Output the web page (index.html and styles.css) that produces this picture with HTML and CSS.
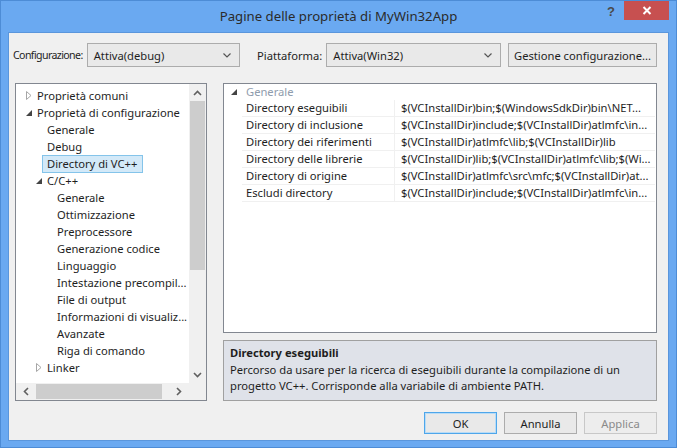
FILE: index.html
```html
<!DOCTYPE html>
<html lang="it">
<head>
<meta charset="utf-8">
<title>Pagine delle proprietà di MyWin32App</title>
<link rel="stylesheet" href="styles.css">
</head>
<body>
<div class="window">
  <div class="titlebar">
    <div></div>
    <div class="title">Pagine delle proprietà di MyWin32App</div>
    <div class="controls">
      <span class="help">?</span>
      <span class="close"><svg width="10" height="9" viewBox="0 0 10 9"><path d="M1.5 1 L8.5 8 M8.5 1 L1.5 8" stroke="#fff" stroke-width="2"/></svg></span>
    </div>
  </div>
  <div class="client">
    <div class="toprow">
      <div class="group group1">
        <span class="lbl lbl1">Configurazione:</span>
        <div class="combo"><span>Attiva(debug)</span><svg class="chev" width="8" height="5" viewBox="0 0 8 5"><path d="M0.5 0.5 L4 4 L7.5 0.5" fill="none" stroke="#555" stroke-width="1.2"/></svg></div>
      </div>
      <div class="group group2">
        <span class="lbl">Piattaforma:</span>
        <div class="combo"><span>Attiva(Win32)</span><svg class="chev" width="8" height="5" viewBox="0 0 8 5"><path d="M0.5 0.5 L4 4 L7.5 0.5" fill="none" stroke="#555" stroke-width="1.2"/></svg></div>
      </div>
      <div class="btn gest">Gestione configurazione...</div>
    </div>
    <div class="main">
      <div class="treepanel">
        <div class="treetop">
          <div class="tree">
            <div class="item l0"><svg class="arr" width="6" height="9" viewBox="0 0 6 9"><path d="M0.5 0.5 L5 4.5 L0.5 8.5 Z" fill="none" stroke="#a6a6a6"/></svg>Proprietà comuni</div>
            <div class="item l0"><svg class="arr exp" width="6" height="6" viewBox="0 0 6 6"><path d="M6 0 L6 6 L0 6 Z" fill="#444"/></svg>Proprietà di configurazione</div>
            <div class="item l1">Generale</div>
            <div class="item l1">Debug</div>
            <div class="item l1"><span class="sel">Directory di VC++</span></div>
            <div class="item l1 c"><svg class="arr exp" width="6" height="6" viewBox="0 0 6 6"><path d="M6 0 L6 6 L0 6 Z" fill="#444"/></svg>C/C++</div>
            <div class="item l2">Generale</div>
            <div class="item l2">Ottimizzazione</div>
            <div class="item l2">Preprocessore</div>
            <div class="item l2">Generazione codice</div>
            <div class="item l2">Linguaggio</div>
            <div class="item l2">Intestazione precompil...</div>
            <div class="item l2">File di output</div>
            <div class="item l2">Informazioni di visualiz...</div>
            <div class="item l2">Avanzate</div>
            <div class="item l2">Riga di comando</div>
            <div class="item l1 c"><svg class="arr" width="6" height="9" viewBox="0 0 6 9"><path d="M0.5 0.5 L5 4.5 L0.5 8.5 Z" fill="none" stroke="#a6a6a6"/></svg>Linker</div>
          </div>
          <div class="vscroll">
            <div class="sbtn"><svg width="9" height="6" viewBox="0 0 9 6"><path d="M1 5 L4.5 1.5 L8 5" fill="none" stroke="#606060" stroke-width="1.6"/></svg></div>
            <div class="vthumb"></div>
            <div class="vtrack"></div>
            <div class="sbtn"><svg width="9" height="6" viewBox="0 0 9 6"><path d="M1 1 L4.5 4.5 L8 1" fill="none" stroke="#606060" stroke-width="1.6"/></svg></div>
          </div>
        </div>
        <div class="hscroll">
          <div class="sbtn hbtn"><svg width="6" height="9" viewBox="0 0 6 9"><path d="M5 1 L1.5 4.5 L5 8" fill="none" stroke="#606060" stroke-width="1.6"/></svg></div>
          <div class="hthumb"></div>
          <div class="htrack"></div>
          <div class="sbtn hbtn"><svg width="6" height="9" viewBox="0 0 6 9"><path d="M1 1 L4.5 4.5 L1 8" fill="none" stroke="#606060" stroke-width="1.6"/></svg></div>
          <div class="corner"></div>
        </div>
      </div>
      <div class="rightcol">
        <div class="grid">
          <div class="cat"><svg class="carr" width="6" height="6" viewBox="0 0 6 6"><path d="M6 0 L6 6 L0 6 Z" fill="#444"/></svg>Generale</div>
          <div class="row"><div class="name">Directory eseguibili</div><div class="val">$(VCInstallDir)bin;$(WindowsSdkDir)bin\NET...</div></div>
          <div class="row"><div class="name">Directory di inclusione</div><div class="val">$(VCInstallDir)include;$(VCInstallDir)atlmfc\in...</div></div>
          <div class="row"><div class="name">Directory dei riferimenti</div><div class="val">$(VCInstallDir)atlmfc\lib;$(VCInstallDir)lib</div></div>
          <div class="row"><div class="name">Directory delle librerie</div><div class="val">$(VCInstallDir)lib;$(VCInstallDir)atlmfc\lib;$(Wi...</div></div>
          <div class="row"><div class="name">Directory di origine</div><div class="val">$(VCInstallDir)atlmfc\src\mfc;$(VCInstallDir)at...</div></div>
          <div class="row"><div class="name">Escludi directory</div><div class="val">$(VCInstallDir)include;$(VCInstallDir)atlmfc\in...</div></div>
        </div>
        <div class="desc">
          <div class="dtitle">Directory eseguibili</div>
          <div class="dtext">Percorso da usare per la ricerca di eseguibili durante la compilazione di un progetto VC++. Corrisponde alla variabile di ambiente PATH.</div>
        </div>
      </div>
    </div>
    <div class="buttons">
      <div class="btn dbtn ok">OK</div>
      <div class="btn dbtn">Annulla</div>
      <div class="btn dbtn dis">Applica</div>
    </div>
  </div>
</div>
</body>
</html>
```
FILE: styles.css
```css
* { box-sizing: border-box; }
html, body { margin: 0; padding: 0; }
body {
  font-family: "Noto Sans", "Open Sans", sans-serif;
  font-size: 11.2px;
  color: #1e1e1e;
  background: #fff;
}
.window {
  width: 677px;
  height: 448px;
  background: #6aa9f1;
  border: 1px solid #4d8cd6;
  display: flex;
  flex-direction: column;
}
.titlebar {
  height: 31px;
  display: grid;
  grid-template-columns: 1fr auto 1fr;
}
.title {
  font-size: 13.2px;
  color: #2b2b2b;
  padding-top: 6px;
}
.controls {
  display: flex;
  justify-content: flex-end;
  align-items: flex-start;
}
.help {
  font-family: "Liberation Sans", sans-serif;
  font-weight: bold;
  font-size: 13px;
  color: #4a4a4a;
  margin-top: 3px;
  margin-right: 9px;
}
.close {
  width: 45px;
  height: 19px;
  background: #c75050;
  display: flex;
  align-items: center;
  justify-content: center;
  margin-right: 7px;
}
.client {
  flex: 1;
  margin: 0 7px 6px 7px;
  background: #f0f0f0;
  border: 1px solid #5a96dc;
  padding: 10px 11px 0 4px;
  display: flex;
  flex-direction: column;
}
.toprow {
  display: flex;
  align-items: center;
  height: 24px;
}
.group {
  display: flex;
  align-items: center;
  gap: 4px;
  flex: none;
}
.group1 { width: 227px; }
.group2 { width: 244px; margin-left: 17px; }
.lbl { white-space: nowrap; flex: none; }
.lbl1 { font-size: 10.6px; letter-spacing: -0.6px; }
.combo {
  flex: 1;
  height: 24px;
  border: 1px solid #acacac;
  background: #e9e9e9;
  display: flex;
  align-items: center;
  justify-content: space-between;
  padding: 0 8px 0 6px;
}
.chev { margin-top: 1px; }
.btn {
  border: 1px solid #acacac;
  background: #e9e9e9;
  display: flex;
  align-items: center;
  justify-content: center;
  white-space: nowrap;
}
.gest { width: 149px; height: 24px; margin-left: 7px; flex: none; }
.main {
  display: flex;
  margin-top: 16px;
  margin-left: 2px;
  height: 318px;
}
.treepanel {
  width: 192px;
  border: 1px solid #828790;
  background: #fff;
  display: flex;
  flex-direction: column;
}
.treetop {
  flex: 1;
  display: flex;
  min-height: 0;
}
.tree {
  flex: 1;
  padding-top: 3px;
  overflow: hidden;
}
.item {
  height: 17px;
  line-height: 17px;
  white-space: nowrap;
  position: relative;
}
.l0 { padding-left: 21px; }
.l1 { padding-left: 31px; }
.l2 { padding-left: 41px; }
.arr { position: absolute; left: 10px; top: 4px; }
.arr.exp { top: 6px; }
.c .arr { left: 20px; }
.sel {
  display: inline-block;
  margin-left: -5px;
  padding: 0 5px 0 4px;
  height: 18px;
  line-height: 16px;
  background: #d3e9f8;
  border: 1px solid #84c4ea;
}
.vscroll {
  width: 17px;
  background: #f0f0f0;
  display: flex;
  flex-direction: column;
}
.sbtn {
  height: 17px;
  flex: none;
  display: flex;
  align-items: center;
  justify-content: center;
}
.vthumb {
  height: 169px;
  margin: 0 1px;
  background: #cdcdcd;
}
.vtrack { flex: 1; }
.hscroll {
  height: 17px;
  background: #f0f0f0;
  display: flex;
}
.hbtn { width: 20px; height: 17px; }
.hthumb { width: 126px; margin: 1px 0; background: #cdcdcd; }
.htrack { flex: 1; }
.corner { width: 17px; }
.rightcol {
  margin-left: 16px;
  width: 434px;
  display: flex;
  flex-direction: column;
}
.grid {
  height: 250px;
  border: 1px solid #828790;
  background: #fff;
}
.cat {
  height: 16px;
  line-height: 15px;
  padding-left: 22px;
  color: #8f9cad;
  position: relative;
}
.carr { position: absolute; left: 7px; top: 5px; }
.row {
  display: flex;
  height: 17px;
  margin-left: 18px;
  margin-right: 1px;
}
.name {
  width: 153px;
  padding-left: 4px;
  line-height: 16px;
  border-bottom: 1px solid #f0f0f0;
  border-right: 1px solid #f0f0f0;
  white-space: nowrap;
  overflow: hidden;
}
.val {
  flex: 1;
  padding-left: 6px;
  line-height: 16px;
  border-bottom: 1px solid #f0f0f0;
  white-space: nowrap;
  overflow: hidden;
}
.desc {
  margin-top: 7px;
  height: 61px;
  border: 1px solid #a0a0a0;
  background: #dfe2e9;
  padding: 3px 6px 4px;
}
.dtitle { font-weight: bold; line-height: 17px; }
.dtext { line-height: 16px; margin-top: 1px; }
.buttons {
  display: flex;
  justify-content: flex-end;
  gap: 7px;
  margin-top: 11px;
}
.dbtn { width: 73px; height: 22px; }
.ok { border-color: #4ea6ea; box-shadow: inset 0 0 0 1px #b9dcf6; }
.dis { color: #8a8a8a; border-color: #c8c8c8; background: #ededed; }
```
